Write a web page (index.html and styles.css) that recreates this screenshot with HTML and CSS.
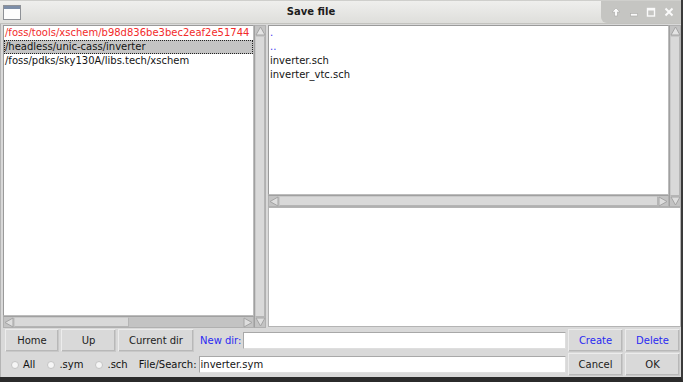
FILE: index.html
```html
<!DOCTYPE html>
<html lang="en">

<head>
    <meta charset="UTF-8">
    <title>Save file</title>
    <link rel="stylesheet" href="styles.css">
</head>

<body>
    <div class="window">
        <div class="titlebar">
            <svg class="app-icon" width="18" height="15" viewBox="0 0 18 15">
                <rect x="0.5" y="0.5" width="17" height="14" fill="#fdfdfd" stroke="#8e9196" />
                <rect x="1" y="1" width="16" height="3" fill="#7d8ea8" />
            </svg>
            <span class="title">Save file</span>
            <div class="wm-buttons">
                <svg width="12" height="12" viewBox="0 0 12 12">
                    <path d="M6 2 L10 6 L7.5 6 L7.5 10 L4.5 10 L4.5 6 L2 6 Z" fill="#fafafa" stroke="#a9a9a6" stroke-width="0.6" />
                </svg>
                <svg width="12" height="12" viewBox="0 0 12 12">
                    <rect x="2.5" y="7.5" width="7" height="2.5" fill="#fafafa" stroke="#a9a9a6" stroke-width="0.6" />
                </svg>
                <svg width="12" height="12" viewBox="0 0 12 12">
                    <rect x="2.5" y="2.5" width="7" height="7.5" fill="none" stroke="#fafafa" stroke-width="1.4" />
                    <rect x="2.5" y="2.5" width="7" height="2" fill="#fafafa" />
                </svg>
                <svg width="12" height="12" viewBox="0 0 12 12">
                    <path d="M2.5 2.5 L9.5 9.5 M9.5 2.5 L2.5 9.5" stroke="#fafafa" stroke-width="2" />
                </svg>
            </div>
        </div>

        <div class="body">
            <div class="panes">
                <!-- directory list -->
                <div class="pane left">
                    <div class="pane-main">
                        <div class="listbox">
                            <div class="item red">/foss/tools/xschem/b98d836be3bec2eaf2e51744</div>
                            <div class="item selected">/headless/unic-cass/inverter</div>
                            <div class="item">/foss/pdks/sky130A/libs.tech/xschem</div>
                        </div>
                        <div class="hscroll">
                            <svg class="arrow" width="10" height="11" viewBox="0 0 10 11">
                                <path d="M1 5.5 L9 1 L9 10 Z" fill="#dedede" stroke="#a4a4a4" />
                            </svg>
                            <div class="trough">
                                <div class="thumb small"></div>
                            </div>
                            <svg class="arrow" width="10" height="11" viewBox="0 0 10 11">
                                <path d="M9 5.5 L1 1 L1 10 Z" fill="#dedede" stroke="#a4a4a4" />
                            </svg>
                        </div>
                    </div>
                    <div class="vscroll">
                        <svg class="arrow" width="11" height="10" viewBox="0 0 11 10">
                            <path d="M5.5 1 L10 9 L1 9 Z" fill="#e4e4e4" stroke="#a4a4a4" />
                        </svg>
                        <div class="trough">
                            <div class="thumb"></div>
                        </div>
                        <svg class="arrow" width="11" height="10" viewBox="0 0 11 10">
                            <path d="M5.5 9 L10 1 L1 1 Z" fill="#dedede" stroke="#a4a4a4" />
                        </svg>
                    </div>
                </div>

                <div class="sash"></div>

                <!-- file list + preview -->
                <div class="pane right">
                    <div class="files">
                        <div class="pane-main">
                            <div class="listbox">
                                <div class="item blue">.</div>
                                <div class="item blue">..</div>
                                <div class="item">inverter.sch</div>
                                <div class="item">inverter_vtc.sch</div>
                            </div>
                            <div class="hscroll">
                                <svg class="arrow" width="10" height="11" viewBox="0 0 10 11">
                                    <path d="M1 5.5 L9 1 L9 10 Z" fill="#dedede" stroke="#a4a4a4" />
                                </svg>
                                <div class="trough">
                                    <div class="thumb"></div>
                                </div>
                                <svg class="arrow" width="10" height="11" viewBox="0 0 10 11">
                                    <path d="M9 5.5 L1 1 L1 10 Z" fill="#dedede" stroke="#a4a4a4" />
                                </svg>
                            </div>
                        </div>
                        <div class="vscroll">
                            <svg class="arrow" width="11" height="10" viewBox="0 0 11 10">
                                <path d="M5.5 1 L10 9 L1 9 Z" fill="#e4e4e4" stroke="#a4a4a4" />
                            </svg>
                            <div class="trough">
                                <div class="thumb"></div>
                            </div>
                            <svg class="arrow" width="11" height="10" viewBox="0 0 11 10">
                                <path d="M5.5 9 L10 1 L1 1 Z" fill="#dedede" stroke="#a4a4a4" />
                            </svg>
                        </div>
                    </div>
                    <div class="preview"></div>
                </div>
            </div>

            <div class="row">
                <button class="btn home">Home</button>
                <button class="btn up">Up</button>
                <button class="btn curdir">Current dir</button>
                <span class="label blue">New dir:</span>
                <div class="entry"></div>
                <button class="btn side blue">Create</button>
                <button class="btn side blue">Delete</button>
            </div>

            <div class="row">
                <label class="radio"><span class="dot"></span>All</label>
                <label class="radio"><span class="dot"></span>.sym</label>
                <label class="radio"><span class="dot"></span>.sch</label>
                <span class="label search">File/Search:</span>
                <div class="entry">inverter.sym</div>
                <button class="btn side">Cancel</button>
                <button class="btn side">OK</button>
            </div>
        </div>
    </div>
</body>

</html>
```

FILE: styles.css
```css
* {
    box-sizing: border-box;
}

body {
    margin: 0;
    padding: 0;
    background-color: #2e2e2e;
    font-family: "DejaVu Sans", sans-serif;
    font-size: 10px;
    color: #111;
}

.window {
    width: 683px;
    height: 382px;
    display: flex;
    flex-direction: column;
    background-color: #d9d9d9;
    border-right: 2px solid #3a3a3a;
    border-bottom: 5px solid #2b2b2b;
}

/* Title bar */
.titlebar {
    height: 25px;
    display: flex;
    align-items: center;
    background: linear-gradient(#efefed, #dededb);
    border-bottom: 1px solid #c2c2be;
    border-top: 1px solid #cfcfcc;
}

.app-icon {
    margin-left: 3px;
    margin-top: 1px;
}

.title {
    flex: 1;
    text-align: center;
    font-weight: bold;
    font-size: 10px;
    color: #1c1c1c;
    margin-top: -1px;
}

.wm-buttons {
    width: 80px;
    height: 22px;
    align-self: flex-start;
    display: flex;
    align-items: center;
    justify-content: space-around;
    padding: 0 3px 0 6px;
    background-color: #c5c5c2;
    border-bottom-left-radius: 6px;
}

/* Body */
.body {
    flex: 1;
    display: flex;
    flex-direction: column;
    padding: 1px 0 1px 2px;
    gap: 1px;
    border-left: 1px solid #b4b4b4;
}

.panes {
    height: 303px;
    display: flex;
}

.pane.left {
    width: 263px;
    display: flex;
}

.sash {
    width: 2px;
}

.pane.right {
    width: 413px;
    display: flex;
    flex-direction: column;
}

.files {
    height: 182px;
    display: flex;
}

.pane-main {
    flex: 1;
    display: flex;
    flex-direction: column;
    min-width: 0;
}

.listbox {
    flex: 1;
    background-color: #ffffff;
    border: 1px solid #9a9a9a;
    border-right-color: #bcbcbc;
    border-bottom-color: #bcbcbc;
    overflow: hidden;
    white-space: nowrap;
    padding-top: 0;
}

.item {
    height: 14px;
    line-height: 14px;
    padding-left: 1px;
    color: #141414;
}

.item.red {
    color: #f22a2a;
}

.item.blue {
    color: #3a3af0;
}

.item.selected {
    background-color: #c3c3c3;
    border: 1px dotted #222;
    line-height: 12px;
    padding-left: 0;
}

/* Scrollbars */
.hscroll {
    height: 12px;
    display: flex;
    align-items: center;
    background-color: #c3c3c3;
    border: 1px solid #b0b0b0;
    border-top-color: #a0a0a0;
}

.vscroll {
    width: 12px;
    display: flex;
    flex-direction: column;
    align-items: center;
    background-color: #c3c3c3;
    border: 1px solid #b0b0b0;
    border-left-color: #a0a0a0;
}

.arrow {
    flex: none;
}

.hscroll .trough {
    flex: 1;
    height: 100%;
    display: flex;
}

.vscroll .trough {
    flex: 1;
    width: 100%;
    display: flex;
    flex-direction: column;
}

.thumb {
    flex: 1;
    background-color: #d9d9d9;
    border: 1px solid #c9c9c9;
    border-bottom-color: #b5b5b5;
    border-right-color: #b5b5b5;
}

.thumb.small {
    flex: none;
    width: 115px;
}

.preview {
    flex: 1;
    background-color: #ffffff;
    border: 1px solid #b4b4b4;
    margin-bottom: 1px;
}

/* Bottom rows */
.row {
    height: 23px;
    display: flex;
    align-items: center;
    padding-left: 2px;
    padding-right: 1px;
    gap: 2px;
}

.btn {
    height: 23px;
    padding: 0;
    font-family: "DejaVu Sans", sans-serif;
    font-size: 10px;
    color: #1c1c1c;
    background-color: #d9d9d9;
    border: 1px solid #c8c8c8;
    border-top-color: #ececec;
    border-left-color: #ececec;
    box-shadow: inset -1px -1px 0 #b8b8b8;
}

.btn.home {
    width: 54px;
}

.btn.up {
    width: 55px;
}

.btn.curdir {
    width: 76px;
}

.btn.side {
    width: 55px;
}

.blue {
    color: #2a2af2;
}

.btn.blue {
    color: #2a2af2;
}

.label {
    white-space: nowrap;
}

.label.blue {
    margin-left: 4px;
}

.entry {
    flex: 1;
    height: 17px;
    line-height: 15px;
    background-color: #ffffff;
    border: 1px solid #a8a8a8;
    border-bottom-color: #dedede;
    border-right-color: #dedede;
    padding-left: 1px;
    color: #141414;
}

.radio {
    display: flex;
    align-items: center;
    gap: 4px;
    margin-left: 6px;
    margin-right: 4px;
}

.dot {
    width: 8px;
    height: 8px;
    border-radius: 50%;
    background-color: #f6f6f6;
    border: 1px solid #c4c4c4;
}

.label.search {
    margin-left: 5px;
}
```
